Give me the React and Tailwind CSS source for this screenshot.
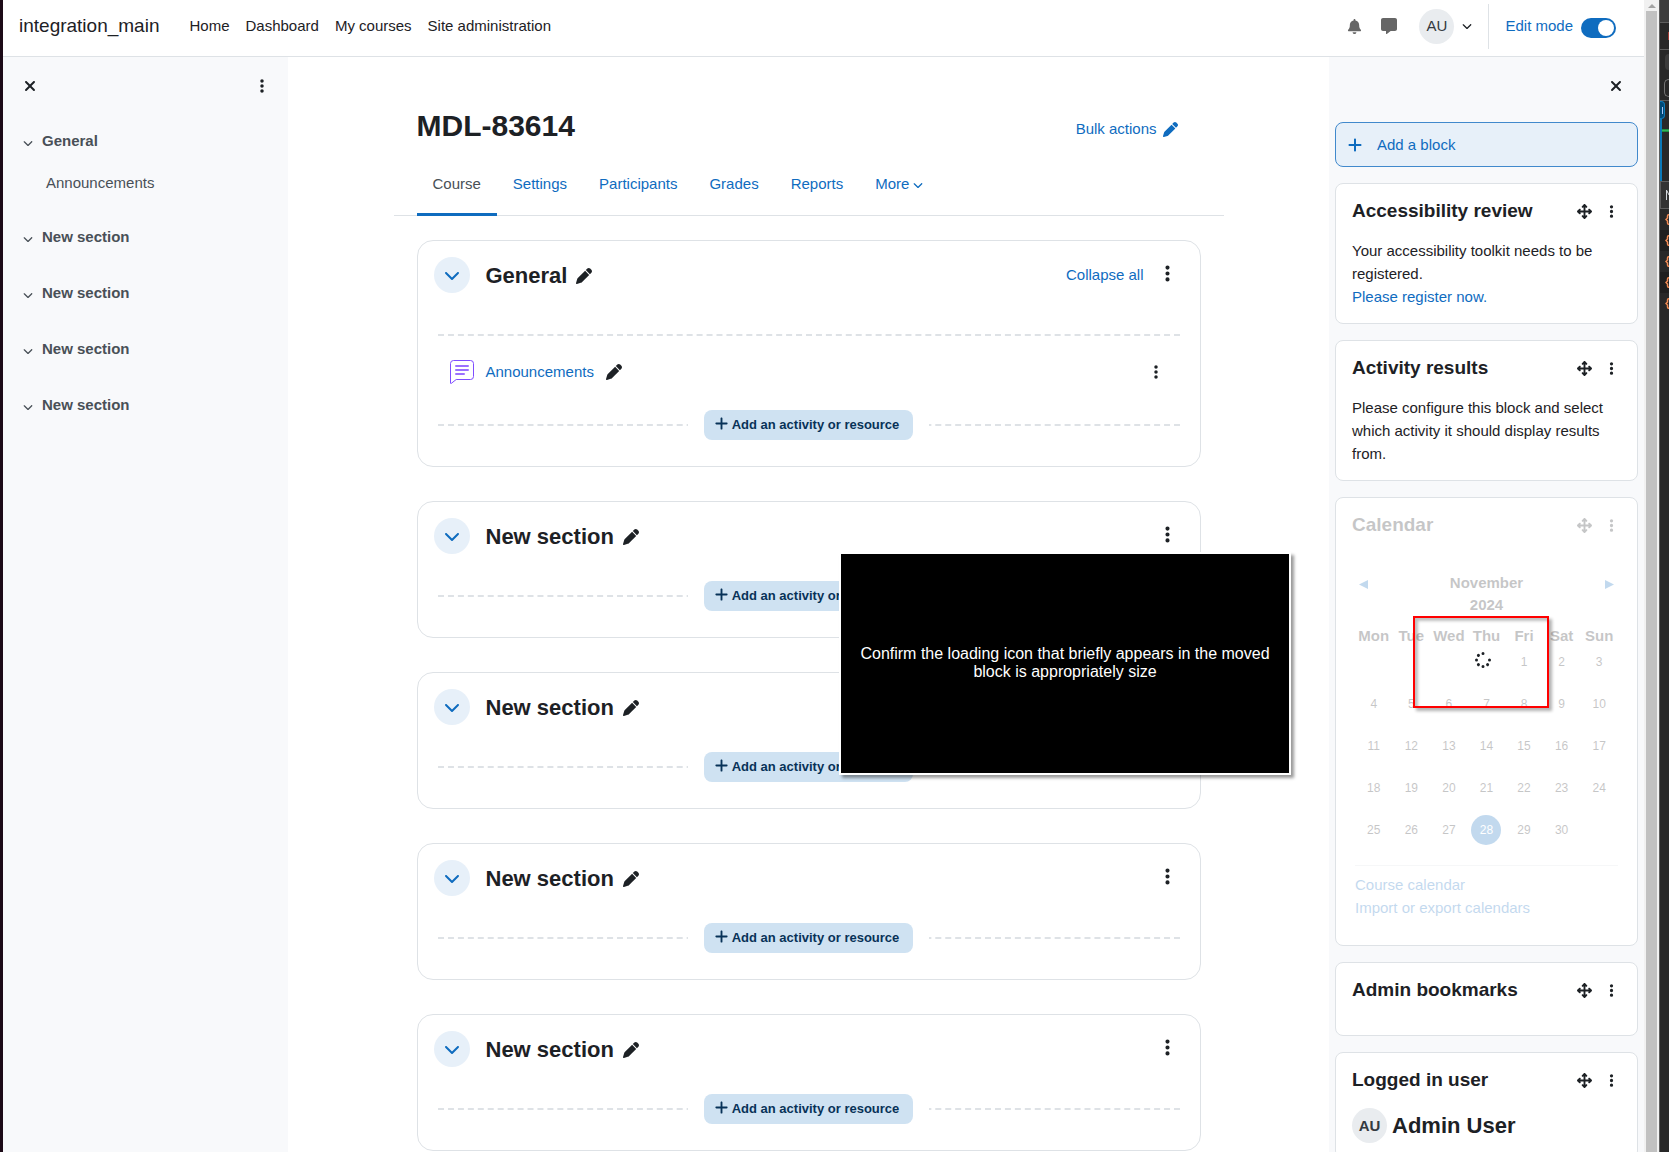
import React from "react";
import { useState } from "react";
import {
  FaArrowsUpDownLeftRight,
  FaBell,
  FaChevronDown,
  FaEllipsisVertical,
  FaMessage,
  FaPen,
  FaPlus,
  FaSpinner,
  FaXmark,
} from "react-icons/fa6";

const navLinks = ["Home", "Dashboard", "My courses", "Site administration"];

const tabs = ["Course", "Settings", "Participants", "Grades", "Reports"];

const indexSections = [
  { name: "General", items: ["Announcements"] },
  { name: "New section", items: [] },
  { name: "New section", items: [] },
  { name: "New section", items: [] },
  { name: "New section", items: [] },
];

const weekdays = ["Mon", "Tue", "Wed", "Thu", "Fri", "Sat", "Sun"];

const weeks = [
  ["", "", "", "", 1, 2, 3],
  [4, 5, 6, 7, 8, 9, 10],
  [11, 12, 13, 14, 15, 16, 17],
  [18, 19, 20, 21, 22, 23, 24],
  [25, 26, 27, 28, 29, 30, ""],
];

const today = 28;

function ForumIcon() {
  return (
    <svg width="24" height="24" viewBox="0 0 24 24" fill="none">
      <path
        d="M.5 23V3.5a3 3 0 0 1 3-3h17a3 3 0 0 1 3 3v13a3 3 0 0 1-3 3H6.2L1.4 23.3Q.5 24 .5 23Z"
        stroke="#7f4dff"
      />
      <path
        d="M6 6h12M6 10h12M6 14h8"
        stroke="#9b70ff"
        strokeWidth="2"
        strokeLinecap="round"
      />
    </svg>
  );
}

function Header({ editMode, setEditMode }) {
  return (
    <header className="flex h-[57px] shrink-0 items-center justify-between border-b border-[#dee2e6] bg-white pr-7 pl-4">
      <div className="flex items-center gap-[30px] pb-1">
        <a href="#home" className="text-[19px] leading-7">
          integration_main
        </a>
        <nav className="flex gap-4">
          {navLinks.map((link) => (
            <a key={link} href="#nav">
              {link}
            </a>
          ))}
        </nav>
      </div>
      <div className="flex h-full items-center pb-1">
        <button aria-label="Notifications" className="text-[#666]">
          <FaBell size={15} />
        </button>
        <button aria-label="Messages" className="ml-[19px] text-[#666]">
          <FaMessage size={16} />
        </button>
        <button
          aria-label="User menu"
          className="ml-[22px] flex items-center gap-2"
        >
          <span className="flex size-[35px] items-center justify-center rounded-full bg-[#e9ecef] text-[#343a40]">
            AU
          </span>
          <FaChevronDown size={10} />
        </button>
        <div className="ml-4 h-[45px] w-px bg-[#dee2e6]" />
        <label
          htmlFor="edit-mode"
          className="ml-4 flex items-center gap-2 text-[#0f6cbf]"
        >
          Edit mode
          <input
            id="edit-mode"
            type="checkbox"
            role="switch"
            checked={editMode}
            onChange={(e) => setEditMode(e.target.checked)}
            className="mt-1 h-5 w-[35px] appearance-none rounded-full bg-[#adb5bd] p-0.5 before:block before:size-4 before:rounded-full before:bg-white checked:bg-[#0f6cbf] checked:before:ml-[15px]"
          />
        </label>
      </div>
    </header>
  );
}

function CourseIndex() {
  return (
    <aside className="w-[285px] shrink-0 bg-[#f8f9fb]">
      <div className="flex h-[58px] items-center justify-between pr-[18px] pl-[19px]">
        <button aria-label="Close course index">
          <FaXmark size={16} />
        </button>
        <button aria-label="Course index options">
          <FaEllipsisVertical size={16} />
        </button>
      </div>
      <nav className="mt-[6px] flex flex-col gap-4 text-[#495057]">
        {indexSections.map((section, i) => (
          <div key={i}>
            <div className="flex h-10 items-center">
              <button aria-label="Collapse" className="mt-1 ml-5">
                <FaChevronDown size={10} />
              </button>
              <a href="#section" className="ml-[9px] font-bold">
                {section.name}
              </a>
            </div>
            {section.items.map((item) => (
              <a
                key={item}
                href="#item"
                className="flex h-10 items-center pt-1 pl-[43px]"
              >
                {item}
              </a>
            ))}
          </div>
        ))}
      </nav>
    </aside>
  );
}

function AddActivity() {
  return (
    <div className="grid items-center">
      <hr className="col-start-1 row-start-1 border-t-2 border-dashed border-[#dee2e6]" />
      <div className="col-start-1 row-start-1 mx-auto bg-white px-4">
        <button className="flex h-[30px] items-center gap-[3px] rounded-lg bg-[#cfe2f2] pr-[14px] pl-[10px] text-[13px] font-bold text-[#083258]">
          <FaPlus size={15} className="mb-1" />
          Add an activity or resource
        </button>
      </div>
    </div>
  );
}

function Section({ name, first, children }) {
  return (
    <section className="rounded-2xl border border-[#dee2e6] bg-white px-4 pt-4 pb-[26px]">
      <div className="flex h-9 items-center">
        <button
          aria-label={"Collapse " + name}
          className="flex size-9 items-center justify-center rounded-full bg-[#e7f0f9] text-[#0f6cbf]"
        >
          <FaChevronDown size={16} />
        </button>
        <div className="ml-4 flex items-center gap-[9px] pt-0.5">
          <h3 className="text-[22px] leading-7 font-bold">{name}</h3>
          <button aria-label="Edit section name">
            <FaPen size={16} />
          </button>
        </div>
        <div className="ml-auto flex items-center pr-[7px]">
          {first && (
            <a href="#collapse" className="mr-[14px] text-[#0f6cbf]">
              Collapse all
            </a>
          )}
          <button aria-label="Section options" className="pb-1">
            <FaEllipsisVertical size={19} />
          </button>
        </div>
      </div>
      <div className="px-1">{children}</div>
      <div className="mt-[27px] px-1">
        <AddActivity />
      </div>
    </section>
  );
}

function Course() {
  return (
    <main className="min-w-0 flex-1 bg-white pt-[51px]">
      <div className="mx-auto max-w-[830px]">
        <div className="flex items-center justify-between px-[23px]">
          <h1 className="text-[30px] leading-9 font-bold">MDL-83614</h1>
          <button className="mt-[6px] mr-[23px] flex items-center gap-[6px] text-[#0f6cbf]">
            Bulk actions <FaPen size={15} />
          </button>
        </div>
        <nav className="mt-[10px] flex border-b border-[#dee2e6] px-[23px]">
          {tabs.map((tab) => (
            <a
              key={tab}
              href="#tab"
              className={
                tab === "Course"
                  ? "-mb-px border-b-3 border-[#0f6cbf] px-4 pt-[19px] pb-[18px] text-[#495057]"
                  : "px-4 pt-[19px] pb-5 text-[#0f6cbf]"
              }
            >
              {tab}
            </a>
          ))}
          <button className="flex items-center gap-1 self-start px-4 pt-[19px] text-[#0f6cbf]">
            More <FaChevronDown size={10} className="mt-0.5" />
          </button>
        </nav>
        <div className="mt-6 flex flex-col gap-[34px] px-[23px]">
          <Section name="General" first>
            <hr className="mt-[41px] border-t-2 border-dashed border-[#dee2e6]" />
            <div className="mt-6 mb-[-1px] flex h-6 items-center pr-4 pl-3">
              <ForumIcon />
              <a href="#announcements" className="ml-3 text-[#0f6cbf]">
                Announcements
              </a>
              <button aria-label="Edit title" className="ml-3">
                <FaPen size={16} />
              </button>
              <button aria-label="Activity options" className="ml-auto">
                <FaEllipsisVertical size={16} />
              </button>
            </div>
          </Section>
          <Section name="New section" />
          <Section name="New section" />
          <Section name="New section" />
          <Section name="New section" />
        </div>
      </div>
    </main>
  );
}

function Block({ title, loading, children }) {
  return (
    <section className="relative rounded-lg border border-[#dee2e6] bg-white px-4 pt-4 pb-[15px]">
      <div className={loading ? "opacity-25" : ""}>
        <div className="mb-[17px] flex h-[22px] items-center justify-between">
          <h3 className="text-[19px] font-bold">{title}</h3>
          <div className="flex items-center gap-3 pr-0.5">
            <button aria-label={"Move " + title}>
              <FaArrowsUpDownLeftRight size={15} />
            </button>
            <button aria-label={title + " actions"}>
              <FaEllipsisVertical size={15} />
            </button>
          </div>
        </div>
        <div className="min-h-0.5 leading-[23px]">{children}</div>
      </div>
      {loading && (
        <div className="absolute top-[118px] left-[77px] flex h-[92px] w-[136px] items-center justify-center border-2 border-[#f00] pb-1 pl-1 shadow-[3px_3px_3px_rgba(0,0,0,0.3),inset_3px_3px_3px_rgba(0,0,0,0.25)]">
          <FaSpinner size={16} />
        </div>
      )}
    </section>
  );
}

function Calendar() {
  return (
    <div className="px-[3px] pt-[19px] pb-[11px] leading-[22px]">
      <div className="mb-2 flex items-start justify-between px-1">
        <button aria-label="Previous month" className="mt-2">
          <svg width="9" height="9" viewBox="0 0 9 9" fill="#0f6cbf">
            <path d="M9 0v9L0 4.500z" />
          </svg>
        </button>
        <h4 className="w-20 text-center font-bold">November 2024</h4>
        <button aria-label="Next month" className="mt-2">
          <svg width="9" height="9" viewBox="0 0 9 9" fill="#0f6cbf">
            <path d="M0 0v9l9-4.500z" />
          </svg>
        </button>
      </div>
      <table className="w-full table-fixed text-center">
        <thead>
          <tr>
            {weekdays.map((day) => (
              <th key={day} className="h-[23px]">
                {day}
              </th>
            ))}
          </tr>
        </thead>
        <tbody className="text-xs">
          {weeks.map((week, i) => (
            <tr key={i}>
              {week.map((day, j) => (
                <td key={j} className="h-[42px] pb-3">
                  <span
                    className={
                      day === today
                        ? "mx-auto flex size-[30px] items-center justify-center rounded-full bg-[#0f6cbf] text-white"
                        : "mx-auto flex size-[30px] items-center justify-center"
                    }
                  >
                    {day}
                  </span>
                </td>
              ))}
            </tr>
          ))}
        </tbody>
      </table>
      <div className="mt-2 flex flex-col items-start gap-px border-t border-[#dee2e6] pt-2 text-[#0f6cbf]">
        <a href="#calendar">Course calendar</a>
        <a href="#export">Import or export calendars</a>
      </div>
    </div>
  );
}

function BlockDrawer() {
  return (
    <aside className="w-[315px] shrink-0 bg-[#f8f9fb] px-[6px]">
      <div className="flex h-[58px] items-center justify-end pr-[14px]">
        <button aria-label="Close block drawer">
          <FaXmark size={16} />
        </button>
      </div>
      <div className="mt-[7px] flex flex-col gap-4">
        <button className="flex h-[45px] items-center gap-[14px] rounded-lg border border-[#4189cc] bg-[#e7f0f9] px-[11px] text-[#0f6cbf]">
          <FaPlus size={16} />
          Add a block
        </button>
        <Block title="Accessibility review">
          <p>Your accessibility toolkit needs to be registered.</p>
          <a href="#register" className="block text-[#0f6cbf]">
            Please register now.
          </a>
        </Block>
        <Block title="Activity results">
          <p>
            Please configure this block and select which activity it should
            display results from.
          </p>
        </Block>
        <Block title="Calendar" loading>
          <Calendar />
        </Block>
        <Block title="Admin bookmarks" />
        <Block title="Logged in user">
          <div className="flex items-center gap-[5px] font-bold">
            <span className="flex size-[35px] items-center justify-center rounded-full bg-[#e9ecef] text-[#343a40]">
              AU
            </span>
            <h2 className="text-[22px] leading-7">Admin User</h2>
          </div>
        </Block>
      </div>
    </aside>
  );
}

function Scrollbar() {
  return (
    <div className="flex w-[15px] shrink-0 flex-col items-center bg-[#f1f1f1]">
      <div className="flex h-[11px] items-center">
        <svg width="8" height="4" viewBox="0 0 8 4" fill="#a3a3a3">
          <path d="M4 0l4 4H0z" />
        </svg>
      </div>
      <div className="w-[11px] flex-1 bg-[#c1c1c1]" />
    </div>
  );
}

// Edge of the browser dev tools docked on the right
function DevTools() {
  return (
    <div className="flex w-[10px] shrink-0 flex-col overflow-hidden border-l border-[#5e5e5e] bg-[#282828]">
      <div className="h-[23px] border-b border-[#5e5e5e] bg-[#3c3c3c]" />
      <div className="flex h-[27px] items-center justify-end border-b border-[#5e5e5e]">
        <div className="h-2 w-px bg-[#a03a34]" />
      </div>
      <div className="flex h-[51px] flex-col items-end justify-between border-b border-[#5e5e5e] pt-1 pb-[3px]">
        <div className="h-4 w-1 rounded-l-full bg-[#3c3c3c]" />
        <div className="h-[18px] w-[5px] rounded-l-lg border border-r-0 border-[#757575]" />
      </div>
      <div className="flex h-[81px] flex-col border-b border-[#5e5e5e]">
        <div className="flex h-[18px] w-[5px] items-center justify-center rounded-r-sm border border-l-0 border-[#0b79b8] bg-[#004a77]">
          <div className="h-[7px] w-px bg-[#a8c7fa]" />
        </div>
        <div className="flex-1 border-l-2 border-[#0b79b8]">
          <div className="mt-[10px] h-[3px] border-y border-[#1e8e3e] bg-[#36b35a]" />
        </div>
      </div>
      <div className="flex h-[27px] items-center justify-end border-b border-l border-[#5e5e5e] bg-[#333]">
        <svg width="3" height="10" viewBox="0 0 3 10" fill="none">
          <path d="M.5 0v10M.8 .5L3 5" stroke="#d5d9dd" />
        </svg>
      </div>
      {[0, 1, 2, 3, 4].map((row) => (
        <div
          key={row}
          className="flex h-[21px] items-center justify-end odd:bg-[#1f1f1f]"
        >
          <svg width="4" height="11" viewBox="0 0 4 11" fill="none">
            <path
              d="M4 .8H3.500Q2.500 .8 2.500 2V4L1 5.500L2.500 7V9Q2.500 10.200 3.500 10.200H4"
              stroke="#f28b54"
              strokeWidth="1.500"
            />
          </svg>
        </div>
      ))}
    </div>
  );
}

export default function App() {
  const [editMode, setEditMode] = useState(true);

  return (
    <div className="relative flex h-screen overflow-hidden border-l-3 border-[#1c0a17] font-['Liberation_Sans',Arial,sans-serif] text-[15px] leading-[22px] text-[#1d2125]">
      <div className="flex min-w-0 flex-1 flex-col">
        <Header editMode={editMode} setEditMode={setEditMode} />
        <div className="flex min-h-0 flex-1">
          <CourseIndex />
          <Course />
          <BlockDrawer />
        </div>
      </div>
      <Scrollbar />
      <DevTools />

      <div
        role="note"
        className="absolute top-[552px] left-[836px] flex h-[223px] w-[452px] items-center justify-center border-2 border-white bg-black px-4 pb-0.5 text-center text-base leading-[18px] text-white shadow-[3px_3px_3px_rgba(0,0,0,0.4)]"
      >
        Confirm the loading icon that briefly appears in the moved block is
        appropriately size
      </div>
    </div>
  );
}
